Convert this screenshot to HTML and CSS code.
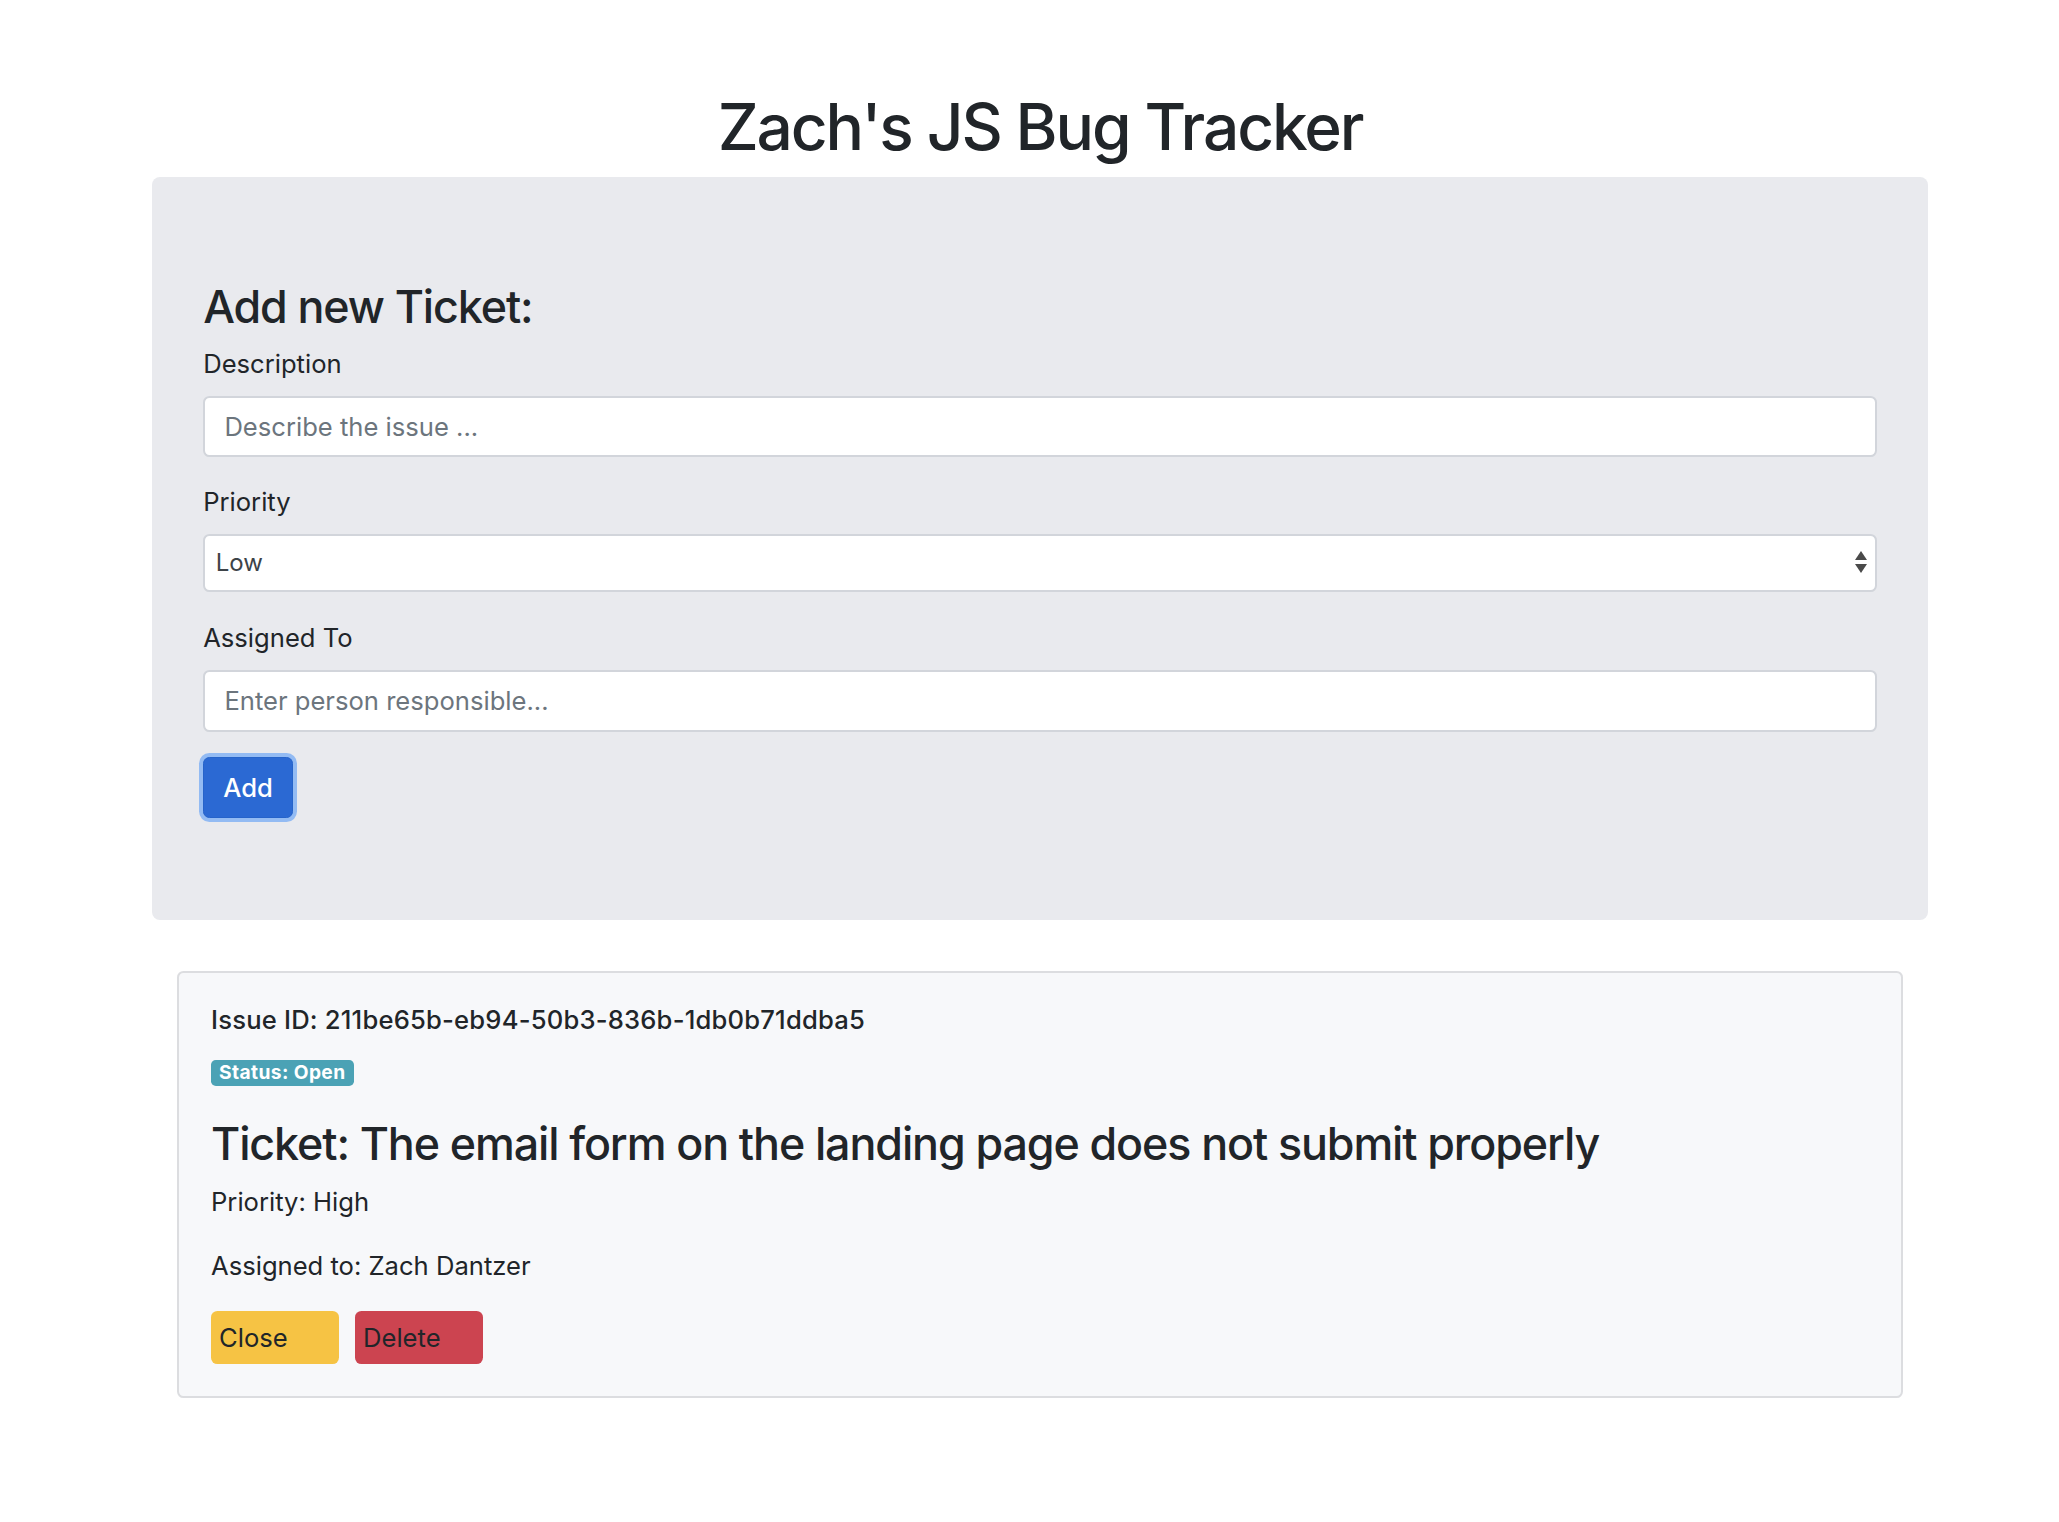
FILE: index.html
```html
<!DOCTYPE html>
<html lang="en">
<head>
<meta charset="utf-8">
<title>Zach's JS Bug Tracker</title>
<link rel="stylesheet" href="styles.css">
</head>
<body>
<div class="container">
  <h1 class="title">Zach's JS Bug Tracker</h1>
  <div class="jumbotron">
    <h3 class="form-heading">Add new Ticket:</h3>
    <form class="ticket-form">
      <div class="form-group">
        <label class="label" for="desc">Description</label>
        <input class="control" id="desc" type="text" placeholder="Describe the issue ...">
      </div>
      <div class="form-group group-select">
        <label class="label" for="prio">Priority</label>
        <div class="select-wrap">
          <select class="control select" id="prio">
            <option>Low</option>
            <option>Medium</option>
            <option>High</option>
          </select>
          <svg class="select-arrows" width="12" height="22" viewBox="0 0 12 22" aria-hidden="true">
            <path d="M6 0 L12 9 L0 9 Z" fill="#4a4a4a"/>
            <path d="M0 13 L12 13 L6 22 Z" fill="#4a4a4a"/>
          </svg>
        </div>
      </div>
      <div class="form-group">
        <label class="label" for="assign">Assigned To</label>
        <input class="control" id="assign" type="text" placeholder="Enter person responsible...">
      </div>
      <button type="button" class="btn-add">Add</button>
    </form>
  </div>
  <div class="issues">
    <div class="card">
      <h6 class="issue-id">Issue ID: 211be65b-eb94-50b3-836b-1db0b71ddba5</h6>
      <div class="status-row"><span class="badge">Status: Open</span></div>
      <h3 class="ticket">Ticket: The email form on the landing page does not submit properly</h3>
      <p class="info">Priority: High</p>
      <p class="info">Assigned to: Zach Dantzer</p>
      <div class="actions">
        <a class="btn btn-close" href="#">Close</a>
        <a class="btn btn-delete" href="#">Delete</a>
      </div>
    </div>
  </div>
</div>
</body>
</html>
```
FILE: styles.css
```css
html, body {
  margin: 0;
  background: #ffffff;
}
body {
  padding-left: 21px;
  font-family: "Inter", "Roboto", "Liberation Sans", sans-serif;
  font-size: 25.6px;
  line-height: 1.5;
  color: #212529;
}
* { box-sizing: border-box; }

.container {
  width: 1824px;
  margin: 0 auto;
  padding: 0 24px;
}

.title {
  margin: 89px 0 11px;
  font-size: 64px;
  font-weight: 500;
  line-height: 1.2;
  text-align: center;
  letter-spacing: -2.1px;
}

.jumbotron {
  background: #e9eaee;
  border-radius: 8px;
  padding: 104.4px 51.2px 102.4px;
  margin-bottom: 51.2px;
}

.form-heading {
  margin: 0 0 9.8px;
  font-size: 44.8px;
  font-weight: 500;
  line-height: 1.2;
  letter-spacing: -1.1px;
}

.form-group {
  margin-bottom: 25.6px;
}
.group-select {
  margin-bottom: 27px;
}
.label {
  display: block;
  margin-bottom: 12.8px;
  line-height: 38.4px;
}

.control {
  display: block;
  width: 100%;
  height: 61.3px;
  padding: 9.6px 19.2px;
  font-family: inherit;
  font-size: 25.6px;
  line-height: 1.5;
  color: #495057;
  background: #ffffff;
  border: 2px solid #d2d5db;
  border-radius: 6.4px;
  outline: none;
}
.control::placeholder {
  color: #6c757d;
  opacity: 1;
}

.select-wrap {
  position: relative;
}
.select {
  height: 58px;
  padding: 0 40px 0 10.5px;
  font-size: 24px;
  -webkit-appearance: none;
  appearance: none;
  color: #3d4348;
}
.select-arrows {
  position: absolute;
  right: 10px;
  top: 17px;
  pointer-events: none;
}

.btn-add {
  display: block;
  height: 60.4px;
  padding: 0 19px;
  font-family: inherit;
  font-size: 25.6px;
  font-weight: 500;
  color: #ffffff;
  background: #2b69d3;
  border: 1.6px solid #2563ca;
  border-radius: 6.4px;
  box-shadow: 0 0 0 4px #93bbf3;
  cursor: pointer;
}

.issues {
  padding: 0 25px;
}

.card {
  background: #f7f8fa;
  border: 2px solid #dcdde0;
  border-radius: 6.4px;
  padding: 32px 32px 32px;
}

.issue-id {
  margin: 0;
  font-size: 25.6px;
  font-weight: 500;
  line-height: 1.2;
  letter-spacing: 0.2px;
}

.status-row {
  display: flex;
  margin: 24.3px 0 32px;
}
.badge {
  display: inline-block;
  padding: 3.4px 8px;
  font-size: 19.2px;
  font-weight: 700;
  line-height: 19.2px;
  letter-spacing: 0.4px;
  color: #ffffff;
  background: #4ba2b5;
  border-radius: 4.8px;
}

.ticket {
  margin: 0 0 11px;
  font-size: 44.8px;
  font-weight: 500;
  line-height: 1.2;
  letter-spacing: -1.1px;
}

.info {
  margin: 0 0 25.6px;
  line-height: 38.4px;
}

.actions {
  display: flex;
  gap: 16px;
}
.btn {
  display: block;
  width: 128px;
  height: 53.4px;
  padding: 0 8px;
  font-size: 25.6px;
  line-height: 53.4px;
  color: #212529;
  text-decoration: none;
  border-radius: 6.4px;
}
.btn-close {
  background: #f6c344;
}
.btn-delete {
  background: #cc4450;
}
```
